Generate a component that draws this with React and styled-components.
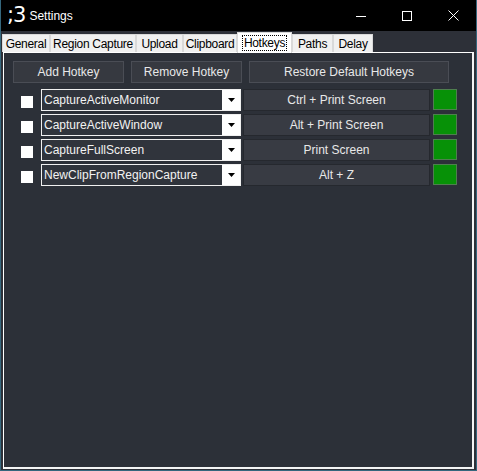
import React from "react";
import styled, { createGlobalStyle } from "styled-components";

const Global = createGlobalStyle`
  html, body { margin: 0; padding: 0; background: #2d3038; }
  body { font-family: "Liberation Sans", Arial, sans-serif; font-size: 12px; }
  * { box-sizing: border-box; }
`;

const Window = styled.div`
  width: 477px;
  height: 471px;
  display: flex;
  flex-direction: column;
  background: #2d3038;
  border: 1px solid #35677d;
  border-top: none;
  overflow: hidden;
`;

const TitleBar = styled.div`
  height: 31px;
  flex: none;
  background: #000;
  display: flex;
  align-items: center;
  color: #fff;
  padding-left: 6px;
`;

const AppIcon = styled.span`
  font-size: 21px;
  line-height: 1;
  font-family: "DejaVu Sans", sans-serif;
  letter-spacing: -1px;
  margin-right: 4px;
  margin-top: -1px;
`;

const Title = styled.span`
  font-size: 12px;
  flex: 1;
`;

const CtrlBtn = styled.div`
  width: 46px;
  height: 31px;
  display: flex;
  align-items: center;
  justify-content: center;
`;

const TabStrip = styled.div`
  height: 21px;
  flex: none;
  display: flex;
  align-items: flex-end;
  padding-left: 1px;
`;

const Tab = styled.div`
  width: ${(p) => p.$w}px;
  height: ${(p) => (p.$active ? "21px" : "18px")};
  margin-bottom: ${(p) => (p.$active ? "-1px" : "0")};
  background: ${(p) => (p.$active ? "#fff" : "#f0f0f0")};
  border: 1px solid #d9d9d9;
  border-bottom: none;
  color: #000;
  display: flex;
  align-items: center;
  justify-content: center;
  font-size: 12px;
  letter-spacing: -0.3px;
  white-space: nowrap;
  position: relative;
  z-index: ${(p) => (p.$active ? 2 : 1)};
`;

const FocusLabel = styled.span`
  outline: 1px dotted #000;
  padding: 0 1px;
  line-height: 14px;
`;

const Page = styled.div`
  margin-left: 2px;
  width: 471px;
  height: 417px;
  border-top: 1px solid #fff;
  border-left: 1px solid #fff;
  border-right: 2px solid #f4f4f4;
  border-bottom: 2px solid #f4f4f4;
  background: #2c3038;
  padding: 8px 0 0 9px;
  display: flex;
  flex-direction: column;
`;

const ButtonRow = styled.div`
  display: flex;
  gap: 7px;
  margin-bottom: 6px;
`;

const Button = styled.div`
  width: ${(p) => p.$w}px;
  height: 22px;
  background: #363940;
  border: 1px solid #4a4d55;
  color: #e8e8e8;
  display: flex;
  align-items: center;
  justify-content: center;
  font-size: 12px;
`;

const Rows = styled.div`
  display: flex;
  flex-direction: column;
  gap: 3px;
`;

const Row = styled.div`
  display: flex;
  align-items: flex-start;
  height: 22px;
`;

const Check = styled.div`
  width: 12px;
  height: 12px;
  background: #fff;
  margin: 7px 8px 0 8px;
`;

const Combo = styled.div`
  width: 200px;
  height: 22px;
  display: flex;
  border: 1px solid #f0f0f0;
  background: #30343c;
`;

const ComboText = styled.div`
  flex: 1;
  color: #f2f2f2;
  padding-left: 2px;
  display: flex;
  align-items: center;
  font-size: 12px;
`;

const ComboArrow = styled.div`
  width: 18px;
  background: #fff;
  display: flex;
  align-items: center;
  justify-content: center;
`;

const HotkeyBtn = styled.div`
  width: 187px;
  height: 22px;
  margin-left: 2px;
  background: #383b43;
  border: 1px solid #25282e;
  color: #e8e8e8;
  display: flex;
  align-items: center;
  justify-content: center;
  font-size: 12px;
`;

const Status = styled.div`
  width: 24px;
  height: 21px;
  margin-left: 3px;
  background: #079107;
  border: 1px solid #4f7f4f;
`;

const hotkeys = [
  ["CaptureActiveMonitor", "Ctrl + Print Screen"],
  ["CaptureActiveWindow", "Alt + Print Screen"],
  ["CaptureFullScreen", "Print Screen"],
  ["NewClipFromRegionCapture", "Alt + Z"],
];

const tabs = [
  ["General", 48],
  ["Region Capture", 86],
  ["Upload", 47],
  ["Clipboard", 54],
  ["Hotkeys", 55],
  ["Paths", 41],
  ["Delay", 40],
];

export default function App() {
  return (
    <>
      <Global />
      <Window>
        <TitleBar>
          <AppIcon>;3</AppIcon>
          <Title>Settings</Title>
          <CtrlBtn>
            <svg width="10" height="10" viewBox="0 0 10 10">
              <line x1="0" y1="5.5" x2="10" y2="5.5" stroke="#fff" strokeWidth="1" />
            </svg>
          </CtrlBtn>
          <CtrlBtn>
            <svg width="10" height="10" viewBox="0 0 10 10">
              <rect x="0.5" y="0.5" width="9" height="9" fill="none" stroke="#fff" strokeWidth="1" />
            </svg>
          </CtrlBtn>
          <CtrlBtn>
            <svg width="11" height="11" viewBox="0 0 11 11">
              <path d="M0.5 0.5 L10.5 10.5 M10.5 0.5 L0.5 10.5" stroke="#fff" strokeWidth="1" />
            </svg>
          </CtrlBtn>
        </TitleBar>
        <TabStrip>
          {tabs.map(([t, w]) => (
            <Tab key={t} $w={w} $active={t === "Hotkeys"}>
              {t === "Hotkeys" ? <FocusLabel>{t}</FocusLabel> : t}
            </Tab>
          ))}
        </TabStrip>
        <Page>
          <ButtonRow>
            <Button $w={111}>Add Hotkey</Button>
            <Button $w={111}>Remove Hotkey</Button>
            <Button $w={200}>Restore Default Hotkeys</Button>
          </ButtonRow>
          <Rows>
            {hotkeys.map(([task, key]) => (
              <Row key={task}>
                <Check />
                <Combo>
                  <ComboText>{task}</ComboText>
                  <ComboArrow>
                    <svg width="7" height="4" viewBox="0 0 7 4">
                      <path d="M0 0 H7 L3.5 4 Z" fill="#000" />
                    </svg>
                  </ComboArrow>
                </Combo>
                <HotkeyBtn>{key}</HotkeyBtn>
                <Status />
              </Row>
            ))}
          </Rows>
        </Page>
      </Window>
    </>
  );
}
